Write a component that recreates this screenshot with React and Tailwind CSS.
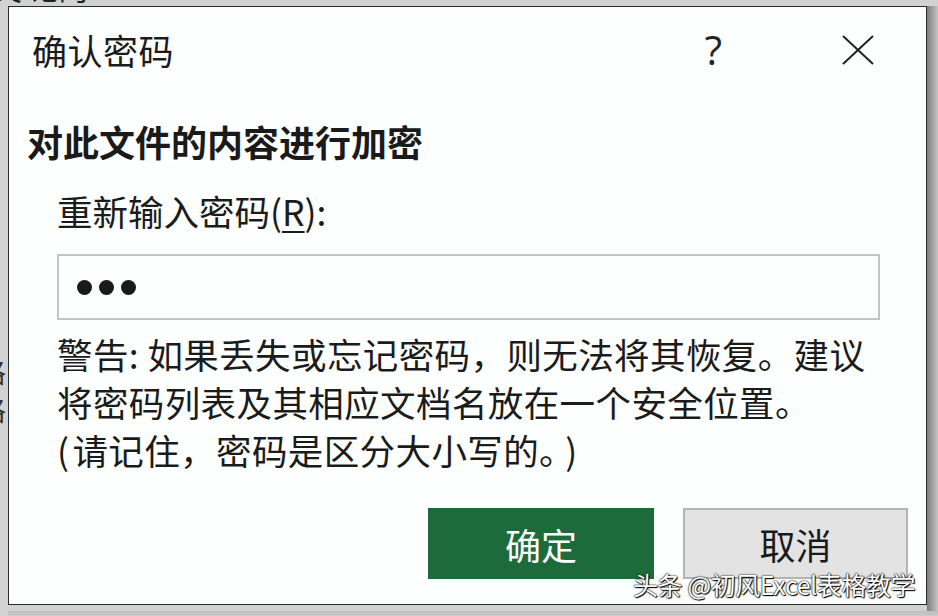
export default function App() {
  const cjk = { fontFamily: '"Noto Sans CJK SC", "Noto Sans", sans-serif' };
  return (
    <div className="relative w-[938px] h-[616px] overflow-hidden bg-[#d2d2d2]" style={cjk}>
      {/* background fragments */}
      <div className="absolute left-[-8px] top-[-28px] text-[30px] leading-none text-[#222]">文 论的</div>
      <div className="absolute left-[-22px] top-[352px] text-[28px] leading-[38px] text-[#333]">
        <div>格</div>
        <div>格</div>
      </div>
      <div className="flex">
        <div className="w-[8px] shrink-0" />
        <div className="flex flex-col">
          <div className="h-[6px]" />
          <div className="flex">
            <div className="w-[919px] h-[599px] bg-[#fdfefe] border border-[#2a2a2a] flex flex-col text-[#1b1b1b]">
              {/* title bar */}
              <div className="flex items-center h-[36px] mt-[25px] pl-[23px] pr-[52px]">
                <div className="text-[35px] leading-[36px] tracking-[0.5px]">确认密码</div>
                <div className="flex-1" />
                <div className="text-[40px] leading-[36px] font-normal text-[#222] mr-[2px]" style={{ fontFamily: '"Open Sans", sans-serif' }}>?</div>
                <div className="w-[118px]" />
                <svg width="32" height="30" viewBox="0 0 32 30" className="-mt-[1px]">
                  <path d="M1 1 L31 29 M31 1 L1 29" stroke="#222" strokeWidth="2" fill="none" />
                </svg>
              </div>
              {/* heading */}
              <div className="mt-[53px] pl-[18px] text-[36px] leading-[40px] font-bold text-[#1a1a1a]">对此文件的内容进行加密</div>
              {/* label */}
              <div className="mt-[30px] pl-[48px] text-[35.5px] leading-[40px]">
                重新输入密码(<span className="underline underline-offset-[5px] decoration-[2px]">R</span>):
              </div>
              {/* input */}
              <div className="mt-[23px] ml-[48px] w-[823px] h-[66px] border-2 border-[#c4c4c4] flex items-center pl-[18px] gap-[7px]">
                <span className="w-[15px] h-[15px] rounded-full bg-[#1a1a1a]" />
                <span className="w-[15px] h-[15px] rounded-full bg-[#1a1a1a]" />
                <span className="w-[15px] h-[15px] rounded-full bg-[#1a1a1a]" />
              </div>
              {/* warning */}
              <div className="mt-[10px] pl-[48px] text-[35.5px] leading-[48px] tracking-[0.4px]">
                <div>警告: 如果丢失或忘记密码，则无法将其恢复。建议</div>
                <div>将密码列表及其相应文档名放在一个安全位置。</div>
                <div><span className="mr-[3px]">(</span>请记住，密码是区分大小写的。<span className="ml-[8px]">)</span></div>
              </div>
              {/* buttons */}
              <div className="mt-[34px] flex pl-[419px] gap-[29px]">
                <div className="w-[226px] h-[71px] bg-[#1d6b3a] flex items-center justify-center text-white text-[36px]">确定</div>
                <div className="w-[225px] h-[71px] bg-[#e3e3e3] border-2 border-[#b4b4b4] flex items-center justify-center text-[#1a1a1a] text-[36px]">取消</div>
              </div>
            </div>
            <div className="w-[11px] h-[605px] bg-gradient-to-r from-[#7e7e7e] to-[#c6c6c6]" />
          </div>
          <div className="h-[11px] bg-gradient-to-b from-[#bdbdbd] to-[#dadada]" />
        </div>
      </div>
      {/* watermark */}
      <div className="absolute left-[633px] top-[567px] text-[25px] leading-[34px] tracking-[-0.4px] text-white whitespace-nowrap [text-shadow:0_0_2px_#000,0_0_1px_#000,1px_1px_1px_#000]">
        头条 @初风Excel表格教学
      </div>
    </div>
  );
}
